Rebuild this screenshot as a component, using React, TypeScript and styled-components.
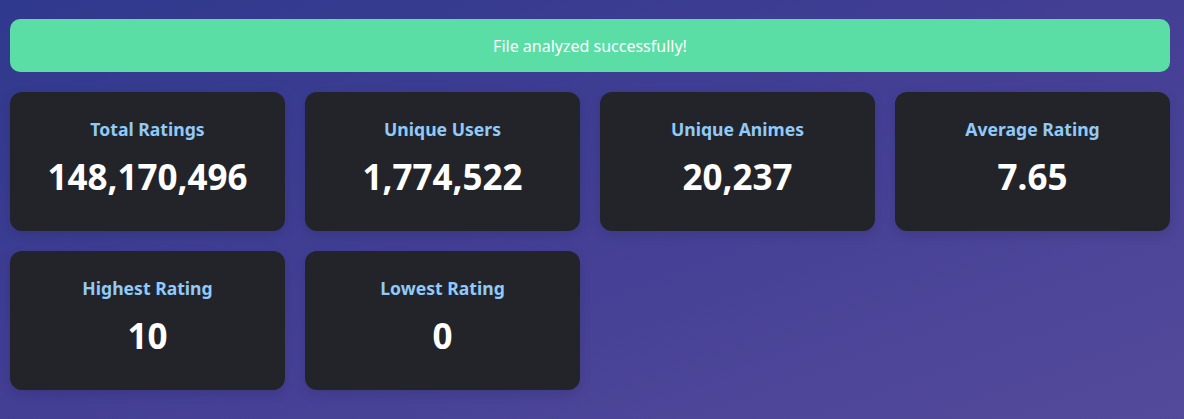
import React from "react";
import styled, { createGlobalStyle } from "styled-components";

const Global = createGlobalStyle`
  html, body { margin: 0; padding: 0; }
  body {
    font-family: "Noto Sans", "Open Sans", sans-serif;
    background: linear-gradient(160deg, #2f398d 0%, #433f95 50%, #544a9b 100%);
    min-height: 419px;
  }
`;

const Page = styled.div`
  padding: 19px 14px 20px 10px;
  display: flex;
  flex-direction: column;
  gap: 20px;
  min-height: 380px;
`;

const Banner = styled.div`
  background: #5adea5;
  color: #ffffff;
  border-radius: 10px;
  height: 53px;
  display: flex;
  align-items: center;
  justify-content: center;
  font-size: 16px;
`;

const Grid = styled.div`
  display: grid;
  grid-template-columns: repeat(4, 275px);
  gap: 20px;
`;

const Card = styled.div`
  background: #232429;
  border-radius: 12px;
  height: 139px;
  box-sizing: border-box;
  padding-top: 25px;
  display: flex;
  flex-direction: column;
  align-items: center;
  box-shadow: 0 4px 12px rgba(0, 0, 0, 0.12);
`;

const Title = styled.div`
  color: #90caf9;
  font-weight: 700;
  font-size: 17.6px;
  line-height: 24px;
`;

const Value = styled.div`
  color: #ffffff;
  font-weight: 700;
  font-size: 35px;
  line-height: 48px;
  margin-top: 12px;
`;

const stats = [
  ["Total Ratings", "148,170,496"],
  ["Unique Users", "1,774,522"],
  ["Unique Animes", "20,237"],
  ["Average Rating", "7.65"],
  ["Highest Rating", "10"],
  ["Lowest Rating", "0"],
];

export default function App() {
  return (
    <>
      <Global />
      <Page>
        <Banner>File analyzed successfully!</Banner>
        <Grid>
          {stats.map(([t, v]) => (
            <Card key={t}>
              <Title>{t}</Title>
              <Value>{v}</Value>
            </Card>
          ))}
        </Grid>
      </Page>
    </>
  );
}
